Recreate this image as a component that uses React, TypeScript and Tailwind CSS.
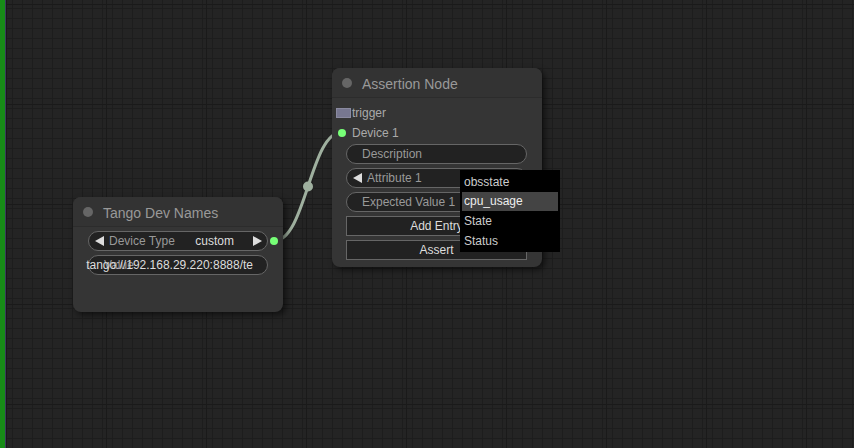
import React from "react";

const font = { fontFamily: '"Liberation Sans", Arial, sans-serif' };

const ArrowLeft = () => (
    <svg width="10" height="10" viewBox="0 0 10 10" className="shrink-0">
        <polygon points="0,5 9,0 9,10" fill="#dddddd" />
    </svg>
);

const ArrowRight = () => (
    <svg width="10" height="10" viewBox="0 0 10 10" className="shrink-0">
        <polygon points="10,5 1,0 1,10" fill="#dddddd" />
    </svg>
);

const Grid = () => (
    <svg className="absolute inset-0" width="854" height="448">
        <defs>
            <pattern id="minor" x="6" y="4" width="10" height="10" patternUnits="userSpaceOnUse">
                <rect width="10" height="10" fill="#242424" />
                <line x1="0" y1="0.5" x2="10" y2="0.5" stroke="#1d1d1d" strokeWidth="1" />
                <line x1="0.5" y1="0" x2="0.5" y2="10" stroke="#1d1d1d" strokeWidth="1" />
            </pattern>
            <pattern id="major" x="6" y="4" width="100" height="100" patternUnits="userSpaceOnUse">
                <rect width="100" height="100" fill="url(#minor)" />
                <line x1="0" y1="0" x2="100" y2="0" stroke="#1a1a1a" strokeWidth="2" />
                <line x1="0" y1="0" x2="0" y2="100" stroke="#1a1a1a" strokeWidth="2" />
            </pattern>
        </defs>
        <rect width="854" height="448" fill="url(#major)" />
        {/* link from Tango Dev Names -> Device 1 */}
        <path d="M274 241 C306 241, 310 132, 342 132" fill="none" stroke="#9fb09f" strokeWidth="3" />
        <circle cx="308" cy="186.5" r="5" fill="#9fb09f" />
    </svg>
);

const TextWidget = ({ label, value, w }: { label: string; value?: string; w: number }) => (
    <div
        className="relative h-[20px] rounded-full bg-[#222] border border-[#666] text-[12px] leading-[18px]"
        style={{ width: w }}
    >
        <span className="absolute left-[15px] text-[#999]">{label}</span>
        {value && <span className="absolute right-[14px] whitespace-nowrap text-[#ddd]">{value}</span>}
    </div>
);

const ComboWidget = ({ label, value, w }: { label: string; value?: string; w: number }) => (
    <div
        className="flex items-center h-[20px] rounded-full bg-[#222] border border-[#666] text-[12px] leading-[18px] pl-[6px] pr-[5px]"
        style={{ width: w }}
    >
        <ArrowLeft />
        <span className="ml-[4px] text-[#999]">{label}</span>
        <span className="ml-auto mr-[18px] text-[#ddd]">{value}</span>
        <ArrowRight />
    </div>
);

const ButtonWidget = ({ label, w }: { label: string; w: number }) => (
    <div
        className="h-[20px] bg-[#222] border border-[#666] text-[12px] leading-[18px] text-center text-[#ddd]"
        style={{ width: w }}
    >
        {label}
    </div>
);

const NodeTitle = ({ title }: { title: string }) => (
    <div className="flex items-center h-[30px] border-b border-[#2c2c2c] bg-[#333] rounded-t-lg">
        <div className="ml-[10px] w-[10px] h-[10px] rounded-full bg-[#666]" />
        <span className="ml-[10px] text-[14px] leading-[16px] pt-[2px] text-[#999]">{title}</span>
    </div>
);

export default function App() {
    return (
        <div className="relative w-[854px] h-[448px] overflow-hidden bg-[#222]" style={font}>
            <Grid />
            <div className="absolute left-0 top-0 h-full w-[5px] bg-[#178c17]" />
            <div className="absolute left-[5px] top-0 h-full w-[1px] bg-[#3b3b5c]" />

            {/* Tango Dev Names */}
            <div className="absolute left-[73px] top-[197px] w-[210px] h-[115px] rounded-lg bg-[#353535] shadow-[3px_3px_6px_rgba(0,0,0,0.55)]">
                <NodeTitle title="Tango Dev Names" />
                <div className="flex flex-col gap-[4px] pt-[4px] pl-[15px]">
                    <ComboWidget label="Device Type" value="custom" w={180} />
                    <TextWidget label="Value" value="tango://192.168.29.220:8888/te" w={180} />
                </div>
                <div className="absolute left-[197px] top-[40px] w-[8px] h-[8px] rounded-full bg-[#77ff77]" />
            </div>

            {/* Assertion Node */}
            <div className="absolute left-[332px] top-[68px] w-[210px] h-[199px] rounded-lg bg-[#353535] shadow-[3px_3px_6px_rgba(0,0,0,0.55)]">
                <NodeTitle title="Assertion Node" />
                <div className="flex flex-col text-[12px] text-[#aaa]">
                    <div className="flex items-center h-[20px] mt-[5px]">
                        <div className="ml-[4px] w-[15px] h-[10px] bg-[#777790] border border-[#8a8aa0]" />
                        <span className="ml-[1px]">trigger</span>
                    </div>
                    <div className="flex items-center h-[20px]">
                        <div className="ml-[6px] w-[8px] h-[8px] rounded-full bg-[#77ff77]" />
                        <span className="ml-[6px]">Device 1</span>
                    </div>
                </div>
                <div className="flex flex-col gap-[4px] pt-[1px] pl-[14px]">
                    <TextWidget label="Description" w={181} />
                    <ComboWidget label="Attribute 1" w={181} />
                    <TextWidget label="Expected Value 1" w={181} />
                    <ButtonWidget label="Add Entry" w={181} />
                    <ButtonWidget label="Assert" w={181} />
                </div>
            </div>

            {/* combo context menu */}
            <div className="absolute left-[460px] top-[170px] w-[100px] h-[82px] bg-black pt-[2px] text-[12px] leading-[20px]">
                <div className="px-[4px] text-[#cccccc]">obsstate</div>
                <div className="mx-[2px] px-[2px] bg-[#444] text-[#eeeeee] leading-[19px]">cpu_usage</div>
                <div className="px-[4px] text-[#cccccc]">State</div>
                <div className="px-[4px] text-[#cccccc]">Status</div>
            </div>
        </div>
    );
}
